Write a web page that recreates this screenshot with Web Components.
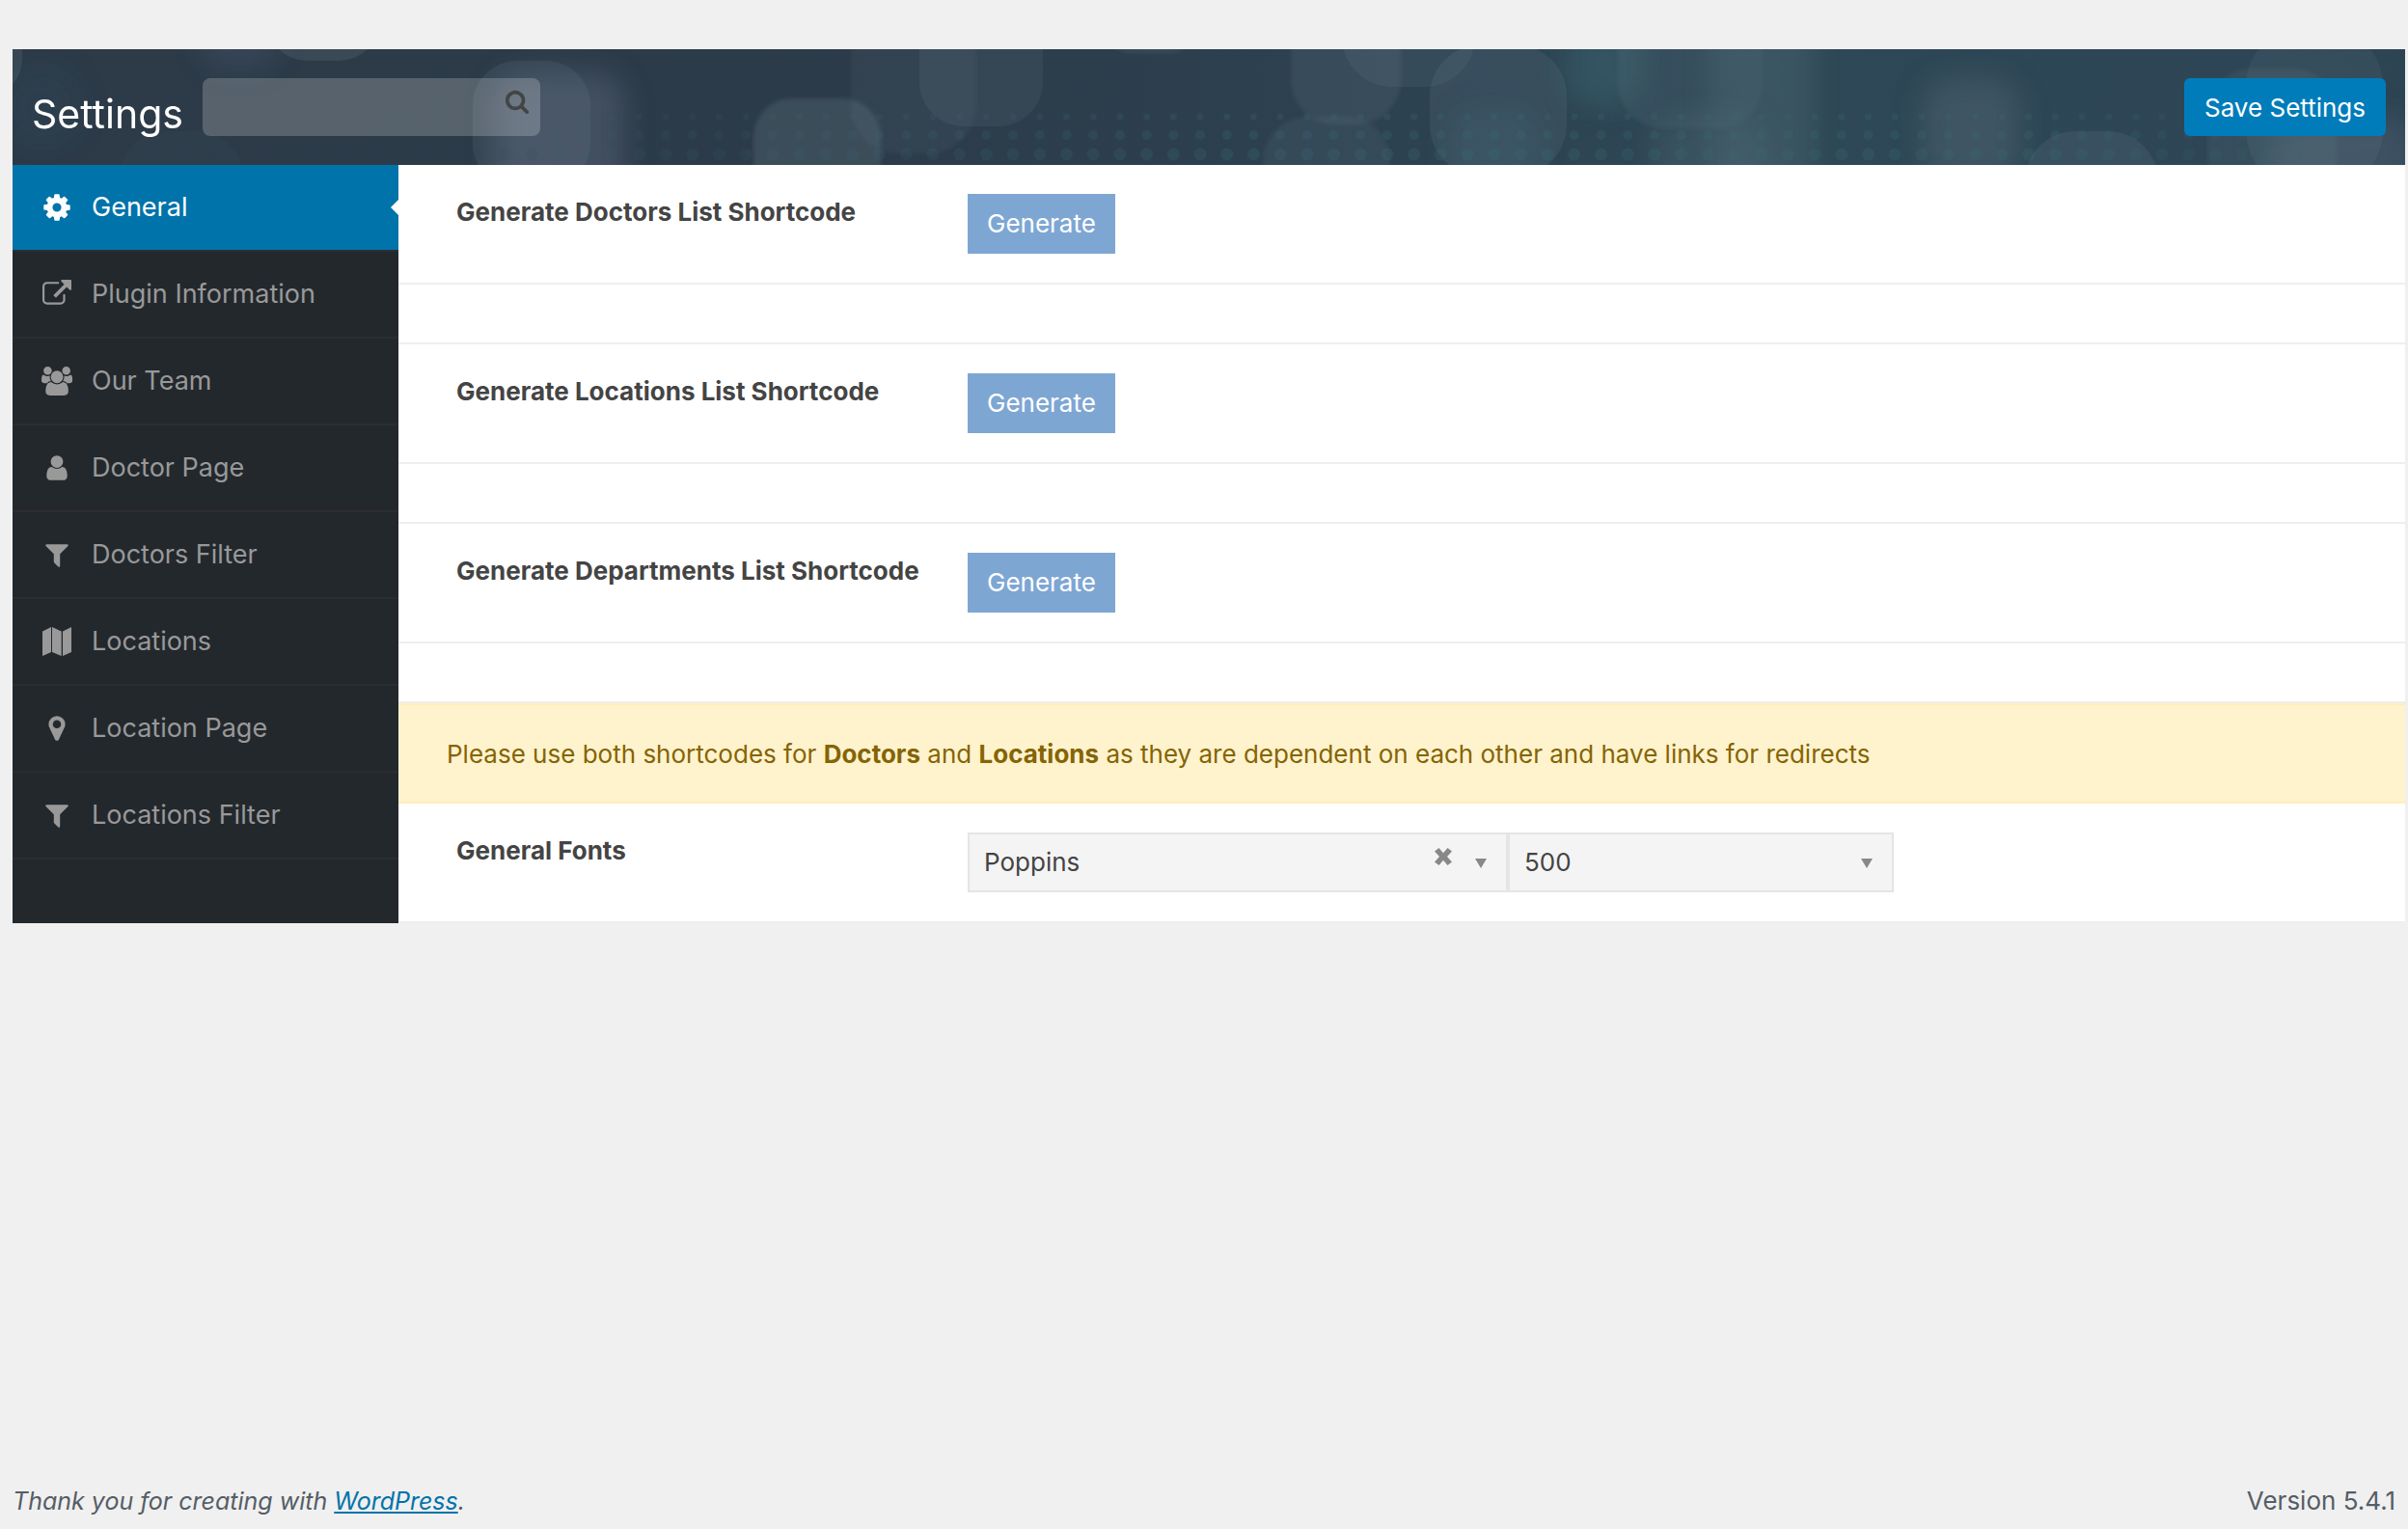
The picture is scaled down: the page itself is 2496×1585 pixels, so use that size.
<!DOCTYPE html>
<html lang="en">
<head>
<meta charset="utf-8">
<title>Settings</title>
<style>
  html, body { margin: 0; }
  body {
    background: #f0f0f0;
    color: #444;
    font-family: Inter, "Liberation Sans", sans-serif;
    font-size: 26px;
    line-height: 36px;
  }
</style>
</head>
<body>
<admin-page>
  <settings-header slot="header" heading="Settings"></settings-header>
  <settings-nav slot="nav">
    <nav-item icon="cog" active>General</nav-item>
    <nav-item icon="external">Plugin Information</nav-item>
    <nav-item icon="group">Our Team</nav-item>
    <nav-item icon="user">Doctor Page</nav-item>
    <nav-item icon="filter">Doctors Filter</nav-item>
    <nav-item icon="map">Locations</nav-item>
    <nav-item icon="marker">Location Page</nav-item>
    <nav-item icon="filter">Locations Filter</nav-item>
  </settings-nav>
  <shortcode-row>Generate Doctors List Shortcode</shortcode-row>
  <shortcode-row>Generate Locations List Shortcode</shortcode-row>
  <shortcode-row>Generate Departments List Shortcode</shortcode-row>
  <notice-bar>Please use both shortcodes for <b>Doctors</b> and <b>Locations</b> as they are dependent on each other and have links for redirects</notice-bar>
  <font-row></font-row>
  <admin-footer slot="footer" version="5.4.1"></admin-footer>
</admin-page>

<script>
const ICONS = {
  cog: ['0 0 1792 1792', 'M1152 896q0-106-75-181t-181-75-181 75-75 181 75 181 181 75 181-75 75-181zm512-109v222q0 12-8 23t-20 13l-185 28q-19 54-39 91 35 50 107 138 10 12 10 25t-9 23q-27 37-99 108t-94 71q-12 0-26-9l-138-108q-44 23-91 38-16 136-29 186-7 28-36 28h-222q-14 0-24.5-8.5t-11.5-21.5l-28-184q-49-16-90-37l-141 107q-10 9-25 9-14 0-25-11-126-114-165-168-7-10-7-23 0-12 8-23 15-21 51-66.5t54-70.5q-27-50-41-99l-183-27q-13-2-21-12.5t-8-23.5v-222q0-12 8-23t19-13l186-28q14-46 39-92-40-57-107-138-10-12-10-24 0-10 9-23 26-36 98.5-107.5t94.5-71.5q13 0 26 10l138 107q44-23 91-38 16-136 29-186 7-28 36-28h222q14 0 24.5 8.5t11.5 21.5l28 184q49 16 90 37l142-107q9-9 24-9 13 0 25 10 129 119 165 170 7 8 7 22 0 12-8 23-15 21-51 66.5t-54 70.5q26 50 41 98l183 28q13 2 21 12.5t8 23.5z'],
  external: ['0 0 1792 1792', 'M1408 928v320q0 119-84.5 203.5t-203.5 84.5h-832q-119 0-203.5-84.5t-84.5-203.5v-832q0-119 84.5-203.5t203.5-84.5h704q14 0 23 9t9 23v64q0 14-9 23t-23 9h-704q-66 0-113 47t-47 113v832q0 66 47 113t113 47h832q66 0 113-47t47-113v-320q0-14 9-23t23-9h64q14 0 23 9t9 23zm384-864v512q0 26-19 45t-45 19-45-19l-176-176-652 652q-10 10-23 10t-23-10l-114-114q-10-10-10-23t10-23l652-652-176-176q-19-19-19-45t19-45 45-19h512q26 0 45 19t19 45z'],
  group: ['0 0 1920 1792', 'M593 896q-162 5-265 128h-134q-82 0-138-40.500t-56-118.500q0-353 124-353 6 0 43.500 21t97.500 42.500 119 21.500q67 0 133-23-5 37-5 66 0 159 81 256zm1071 637q0 120-73 189.500t-194 69.500h-874q-121 0-194-69.500t-73-189.500q0-53 3.500-103.500t14-109 26.500-108.500 43-97.500 62-81 85.500-53.500 111.500-20q10 0 43 21.500t73 48 107 48 135 21.500 135-21.500 107-48 73-48 43-21.500q61 0 111.500 20t85.500 53.500 62 81 43 97.500 26.500 108.500 14 109 3.500 103.500zm-1024-1277q0 106-75 181t-181 75-181-75-75-181 75-181 181-75 181 75 75 181zm704 384q0 159-112.500 271.500t-271.500 112.500-271.500-112.500-112.500-271.500 112.500-271.500 271.500-112.500 271.500 112.500 112.500 271.500zm576 225q0 78-56 118.500t-138 40.500h-134q-103-123-265-128 81-97 81-256 0-29-5-66 66 23 133 23 59 0 119-21.500t97.500-42.500 43.500-21q124 0 124 353zm-128-609q0 106-75 181t-181 75-181-75-75-181 75-181 181-75 181 75 75 181z'],
  user: ['0 0 1792 1792', 'M1536 1399q0 109-62.500 187t-150.500 78h-854q-88 0-150.500-78t-62.500-187q0-85 8.500-160.500t31.500-152 58.500-131 94-89 134.500-34.500q131 128 313 128t313-128q76 0 134.500 34.500t94 89 58.500 131 31.500 152 8.500 160.500zm-256-887q0 159-112.500 271.500t-271.500 112.500-271.500-112.500-112.500-271.500 112.500-271.500 271.500-112.500 271.500 112.500 112.500 271.500z'],
  filter: ['0 0 1792 1792', 'M1595 295q17 41-14 70l-493 493v742q0 42-39 59-13 5-25 5-27 0-45-19l-256-256q-19-19-19-45v-486l-493-493q-31-29-14-70 17-39 59-39h1280q42 0 59 39z'],
  map: ['0 0 30 30', 'M0 4.600 9 0V26L0 30zM10 0 19.700 4.600V30L10 26zM21 4.600 30 0V26L21 30z'],
  marker: ['0 0 1792 1792', 'M1152 640q0-106-75-181t-181-75-181 75-75 181 75 181 181 75 181-75 75-181zm256 0q0 109-33 179l-364 774q-16 33-47.500 52t-67.500 19-67.500-19-46.500-52l-365-774q-33-70-33-179 0-212 150-362t362-150 362 150 150 362z'],
  search: ['0 0 1792 1792', 'M1216 832q0-185-131.500-316.500t-316.500-131.500-316.500 131.500-131.500 316.500 131.500 316.500 316.500 131.500 316.500-131.500 131.500-316.500zm512 832q0 52-38 90t-90 38q-54 0-90-38l-343-342q-179 124-399 124-143 0-273.500-55.500t-225-150-150-225-55.500-273.500 55.500-273.500 150-225 225-150 273.500-55.500 273.500 55.500 225 150 150 225 55.500 273.500q0 220-124 399l343 343q37 37 37 90z'],
  close: ['0 0 18 18', 'M4.500 0 9 5.200 13.500 0 18 3.600 13 9 18 14.400 13.500 18 9 12.800 4.500 18 0 14.400 5 9 0 3.600z'],
  caret: ['0 0 12 10', 'M0 0H12L6 10z'],
};

function define(name, html, setup) {
  const template = document.createElement('template');
  template.innerHTML = html;
  customElements.define(name, class extends HTMLElement {
    connectedCallback() {
      if (this.shadowRoot) return;
      this.attachShadow({ mode: 'open' }).append(template.content.cloneNode(true));
      if (setup) setup(this, this.shadowRoot);
    }
  });
}

define('ui-icon', `
  <style>
    :host { display: block; flex: none; height: 30px; }
    svg { display: block; height: 100%; fill: currentColor; }
  </style>
  <svg aria-hidden="true"><path/></svg>`, (host, root) => {
  const [box, d] = ICONS[host.getAttribute('name')];
  root.querySelector('svg').setAttribute('viewBox', box);
  root.querySelector('path').setAttribute('d', d);
});

define('admin-page', `
  <style>
    :host { display: flex; flex-direction: column; justify-content: space-between; min-height: 100vh; }
    .panel { margin: 51px 3px 0 13px; }
    .body { display: flex; }
    main { flex: 1; min-width: 0; background: #fff; }
  </style>
  <div class="panel">
    <slot name="header"></slot>
    <div class="body">
      <slot name="nav"></slot>
      <main><slot></slot></main>
    </div>
  </div>
  <slot name="footer"></slot>`);

define('header-art', `
  <style>
    :host { display: block; }
    svg { display: block; width: 100%; height: 100%; }
  </style>
  <svg viewBox="0 0 2480 120" preserveAspectRatio="xMidYMid slice" aria-hidden="true">
    <defs>
      <linearGradient id="base">
        <stop offset="0" stop-color="#2d3b48"/><stop offset=".35" stop-color="#2c3b49"/>
        <stop offset=".55" stop-color="#2d4150"/><stop offset=".75" stop-color="#2e4857"/>
        <stop offset="1" stop-color="#2d4453"/>
      </linearGradient>
      <filter id="soft" x="-20%" y="-20%" width="140%" height="140%"><feGaussianBlur stdDeviation="2"/></filter>
      <filter id="haze" x="-60%" y="-60%" width="220%" height="220%"><feGaussianBlur stdDeviation="14"/></filter>
      <linearGradient id="fade">
        <stop offset="0" stop-color="#fff" stop-opacity=".1"/><stop offset=".3" stop-color="#fff" stop-opacity=".5"/>
        <stop offset=".5" stop-color="#fff"/><stop offset=".85" stop-color="#fff"/><stop offset="1" stop-color="#fff" stop-opacity=".1"/>
      </linearGradient>
      <mask id="dotmask"><rect width="2480" height="120" fill="url(#fade)"/></mask>
    </defs>
    <rect width="2480" height="120" fill="url(#base)"/>
    <g filter="url(#haze)">
      <rect x="195" y="-40" width="80" height="60" rx="30" fill="#4a5a76" opacity=".35"/>
      <rect x="-10" y="20" width="80" height="80" rx="40" fill="#31465a" opacity=".3"/>
      <rect x="500" y="24" width="134" height="150" rx="30" fill="#586377" opacity=".5"/>
      <rect x="1610" y="-30" width="80" height="90" rx="30" fill="#3b6470" opacity=".45"/>
      <rect x="1700" y="70" width="120" height="80" rx="30" fill="#4a6570" opacity=".4"/>
      <rect x="1980" y="30" width="100" height="110" rx="30" fill="#4d6470" opacity=".5"/>
      <rect x="2340" y="70" width="150" height="80" rx="30" fill="#566577" opacity=".4"/>
      <rect x="1490" y="60" width="90" height="80" rx="30" fill="#3f6572" opacity=".25"/>
    </g>
    <g fill="#8fa8b4" fill-opacity=".13">
      <rect x="-80" y="-60" width="90" height="110" rx="40"/>
      <rect x="262" y="-80" width="120" height="92" rx="44"/>
      <rect x="110" y="85" width="130" height="120" rx="50" fill-opacity=".03"/>
      <rect x="477" y="12" width="122" height="132" rx="46" fill-opacity=".1"/>
      <rect x="1469" y="-5" width="142" height="137" rx="54" fill-opacity=".11"/>
      <rect x="1378" y="-90" width="138" height="129" rx="52" fill-opacity=".09"/>
      <rect x="2086" y="85" width="138" height="130" rx="52" fill-opacity=".11"/>
      <rect x="2315" y="-24" width="142" height="170" rx="62" fill-opacity=".09"/>
      <rect x="940" y="-60" width="128" height="140" rx="46" fill-opacity=".09"/>
    </g>
    <g fill="#8fa8b4" fill-opacity=".11" filter="url(#soft)">
      <rect x="768" y="51" width="132" height="120" rx="40" fill-opacity=".17"/>
      <rect x="869" y="-60" width="130" height="168" rx="50" fill-opacity=".07"/>
      <rect x="1138" y="-60" width="82" height="64" rx="20"/>
      <rect x="1325" y="-60" width="114" height="138" rx="46"/>
      <rect x="1296" y="70" width="132" height="120" rx="46" fill-opacity=".09"/>
      <rect x="2275" y="20" width="134" height="140" rx="46" fill-opacity=".09"/>
      <rect x="1664" y="-60" width="150" height="142" rx="46" fill-opacity=".09"/>
    </g>
    <rect x="1760" y="-60" width="106" height="240" fill="#4f6a74" opacity=".4" filter="url(#haze)"/>
    <g mask="url(#dotmask)" opacity=".28" class="dots"></g>
  </svg>`, (host, root) => {
  const g = root.querySelector('.dots');
  const rows = [[70, 3.5], [89, 5], [109, 6.5]];
  for (let x = 123; x < 2410; x += 27.7)
    for (const [y, r] of rows) {
      if (x < 560 && r < 6) continue;
      const c = document.createElementNS('http://www.w3.org/2000/svg', 'circle');
      c.setAttribute('cx', x); c.setAttribute('cy', y); c.setAttribute('r', r);
      c.setAttribute('fill', x < 560 ? '#30465a' : '#3a6874');
      g.append(c);
    }
});

define('settings-header', `
  <style>
    :host { display: grid; height: 120px; overflow: hidden; }
    header-art, .bar { grid-area: 1 / 1; min-width: 0; }
    header-art { height: 120px; }
    .bar { z-index: 1; display: flex; align-items: center; padding: 0 20px; }
    h1 { margin: 0 20px 0 0; padding-top: 14px; color: #fff; font-size: 41px; font-weight: 400; line-height: 50px; }
    form { display: flex; width: 350px; height: 60px; border-radius: 8px; background: rgba(255,255,255,.2); }
    input { flex: 1; min-width: 0; padding: 0 16px; border: 0; outline: 0; background: none; color: #fff; font: inherit; }
    .find { display: flex; align-items: flex-start; padding: 11px 11px 0; border: 0; background: none; color: #444; }
    .find ui-icon { height: 26px; }
    .save { margin-left: auto; height: 60px; padding: 1px 21px 0; border: 0; border-radius: 6px; background: #007cba; color: #fff; font: inherit; }
  </style>
  <header-art></header-art>
  <div class="bar">
    <h1></h1>
    <form role="search">
      <input type="search" aria-label="Search settings">
      <button class="find" type="button" aria-label="Search"><ui-icon name="search"></ui-icon></button>
    </form>
    <button class="save" type="button">Save Settings</button>
  </div>`, (host, root) => {
  root.querySelector('h1').textContent = host.getAttribute('heading');
});

define('settings-nav', `
  <style>
    :host { display: block; flex: none; width: 400px; background: #23282d; }
    nav { padding-bottom: 66px; }
  </style>
  <nav><slot></slot></nav>`);

define('nav-item', `
  <style>
    :host { display: block; border-bottom: 2px solid #2c2d2f; }
    a {
      position: relative; display: flex; align-items: center; gap: 20px;
      height: 88px; padding: 0 30px;
      color: #999; font-size: 27px; text-decoration: none;
    }
    .icon { display: flex; justify-content: center; width: 32px; }
    :host([active]) a { background: #0073aa; color: #fff; }
    :host([active]) ui-icon { height: 32px; }
    :host([active]) a::after {
      content: ""; position: absolute; right: 0; top: 36px;
      border: 8px solid transparent; border-right-color: #fff; border-left: 0;
    }
  </style>
  <a href="#"><span class="icon"></span><slot></slot></a>`, (host, root) => {
  const icon = document.createElement('ui-icon');
  icon.setAttribute('name', host.getAttribute('icon'));
  root.querySelector('.icon').append(icon);
});

define('shortcode-row', `
  <style>
    :host { display: block; }
    .row { display: flex; padding: 30px 60px; border-bottom: 2px solid #eee; }
    .label { width: 530px; font-weight: 650; line-height: 38px; }
    button { height: 62px; padding: 0 20px; border: 0; background: #7ea6d3; color: #fff; font: inherit; }
    .result { height: 60px; border-bottom: 2px solid #eee; }
  </style>
  <div class="row"><span class="label"><slot></slot></span><button type="button">Generate</button></div>
  <div class="result"></div>`);

define('notice-bar', `
  <style>
    :host { display: block; padding: 33px 50px 31px; border: solid #ffeeba; border-width: 2px 0; background: #fff3cd; color: #856404; }
    ::slotted(b) { font-weight: 700; }
  </style>
  <slot></slot>`);

define('font-row', `
  <style>
    :host { display: flex; padding: 30px 60px; border-bottom: 2px solid #eee; }
    .label { width: 530px; font-weight: 650; line-height: 38px; }
    .picker { display: grid; flex: 0 1 var(--w); height: 62px; }
    .family { --w: 560px; }
    .weight { --w: 400px; }
    select {
      grid-area: 1 / 1; min-width: 0; height: 62px; padding: 0 15px;
      appearance: none; border: 2px solid #e5e5e5; border-radius: 0;
      background: #f4f4f4; color: #444; font: inherit;
    }
    .marks { grid-area: 1 / 1; z-index: 1; justify-self: end; display: flex; gap: 24px; padding: 0 22px; color: #888; pointer-events: none; }
    .marks > ui-icon { height: 10px; margin-top: 27px; }
    button { display: flex; align-items: flex-start; padding: 16px 0 0; border: 0; background: none; color: inherit; pointer-events: auto; }
    button ui-icon { height: 18px; }
  </style>
  <label class="label" for="family">General Fonts</label>
  <div class="picker family">
    <select id="family"><option>Poppins</option></select>
    <div class="marks">
      <button type="button" aria-label="Clear font"><ui-icon name="close"></ui-icon></button>
      <ui-icon name="caret"></ui-icon>
    </div>
  </div>
  <div class="picker weight">
    <select aria-label="Font weight"><option>500</option></select>
    <div class="marks"><ui-icon name="caret"></ui-icon></div>
  </div>`);

define('admin-footer', `
  <style>
    :host { display: flex; justify-content: space-between; padding: 24px 13px 11px; color: #555d66; }
    em { font-size: 25px; }
    a { color: #0073aa; text-decoration: underline; }
  </style>
  <em>Thank you for creating with <a href="#">WordPress</a>.</em>
  <span></span>`, (host, root) => {
  root.querySelector('span').textContent = 'Version ' + host.getAttribute('version');
});
</script>
</body>
</html>
